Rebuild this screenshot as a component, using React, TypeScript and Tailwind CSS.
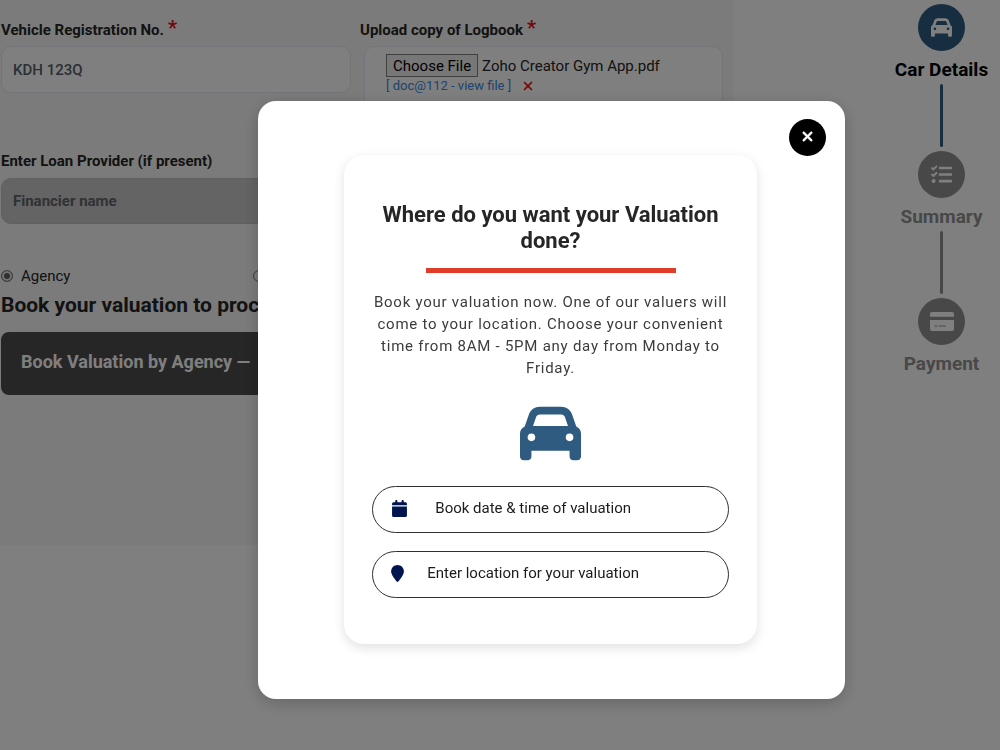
import { useRef, useState } from "react";
import { FaCar, FaCalendar, FaLocationPin, FaXmark } from "react-icons/fa6";
import { FaTasks } from "react-icons/fa";

function CardIcon() {
  return (
    <svg viewBox="0 0 24 19" className="h-[19px] w-6" fill="currentColor" aria-hidden="true">
      <path d="M2 0h20a2 2 0 0 1 2 2v2.7H0V2a2 2 0 0 1 2-2z" />
      <path
        fillRule="evenodd"
        d="M0 8h24v9a2 2 0 0 1-2 2H2a2 2 0 0 1-2-2zM4.4 13.6v.9h3.2v-.9zM8.8 13.6v.9h7v-.9z"
      />
    </svg>
  );
}

const steps = [
  { label: "Car Details", icon: <FaCar />, active: true },
  { label: "Summary", icon: <FaTasks />, active: false },
  { label: "Payment", icon: <CardIcon />, active: false },
];

function Stepper() {
  return (
    <ol className="ml-auto flex w-[117px] flex-col pt-1">
      {steps.map(({ label, icon, active }, i) => (
        <li key={label} className="flex flex-col items-center">
          <span
            className={
              active
                ? "flex size-[47px] items-center justify-center rounded-full bg-[#2f5b80] text-[21px] text-white"
                : "flex size-[47px] items-center justify-center rounded-full bg-[#909090] text-[21px] text-white"
            }
          >
            {icon}
          </span>
          <span
            className={
              active
                ? "mt-[5px] flex h-7 items-center whitespace-nowrap text-[19px] font-bold text-black"
                : "mt-[5px] flex h-7 items-center whitespace-nowrap text-[19px] font-bold text-[#909090]"
            }
          >
            {label}
          </span>
          {i < steps.length - 1 && (
            <span
              className={
                active
                  ? "mb-1 h-[63px] w-[3px] rounded-full bg-[#2f5b80]"
                  : "mb-1 h-[63px] w-[3px] rounded-full bg-[#909090]"
              }
            />
          )}
        </li>
      ))}
    </ol>
  );
}

function Required() {
  return <span className="mb-1 ml-1 text-xl leading-5 text-[#e01020]">*</span>;
}

function VehicleForm() {
  const fileRef = useRef<HTMLInputElement>(null);
  return (
    <form className="h-[545px] min-w-0 flex-1 bg-[#f6f6f6] pl-px pr-2.5 text-[#262626]">
      <div className="grid grid-cols-[350px_1fr] gap-[9px] pt-5">
        <div>
          <label htmlFor="reg" className="flex h-5 items-center text-[15px] font-bold">
            Vehicle Registration No.
            <Required />
          </label>
          <input
            id="reg"
            defaultValue="KDH 123Q"
            className="mt-1.5 h-[47px] w-full rounded-[10px] border border-[#e4e8ee] bg-white px-[11px] text-[15px] font-medium text-[#58606c] outline-none"
          />
        </div>
        <div>
          <label htmlFor="logbook" className="flex h-5 items-center text-[15px] font-bold">
            Upload copy of Logbook
            <Required />
          </label>
          <div className="ml-1 mt-1.5 h-[70px] rounded-[10px] border border-[#e4e8ee] bg-white px-[21px] pt-[7px]">
            <input id="logbook" ref={fileRef} type="file" className="hidden" />
            <div className="flex items-center gap-1 text-[15px] leading-5">
              <button
                type="button"
                onClick={() => fileRef.current?.click()}
                className="h-[23px] border border-[#808080] bg-[#efefef] px-1.5 leading-5 text-black"
              >
                Choose File
              </button>
              <span>Zoho Creator Gym App.pdf</span>
            </div>
            <div className="mt-px flex items-center gap-2.5 text-[13px] leading-4">
              <a href="#file" className="text-[#3a86e0]">
                [ doc@112 - view file ]
              </a>
              <button type="button" aria-label="Remove file" className="text-sm text-[#f01010]">
                <FaXmark />
              </button>
            </div>
          </div>
        </div>
      </div>

      <div className="pt-[35px]">
        <label htmlFor="loan" className="flex h-5 items-center text-[15px] font-bold">
          Enter Loan Provider (if present)
        </label>
        <input
          id="loan"
          placeholder="Financier name"
          className="mt-[7px] h-[46px] w-[350px] rounded-[10px] border border-[#c0c0c0] bg-[#c8c8c8] px-[11px] text-[15px] font-bold outline-none placeholder:text-[#606468]"
        />
      </div>

      <div className="mt-10 flex h-6 items-center">
        <label className="flex w-[252px] items-center gap-2 text-[15px]">
          <input
            type="radio"
            name="valuer"
            defaultChecked
            className="size-3 appearance-none rounded-full border border-[#808080] bg-[#f6f6f6] checked:bg-[#606060] checked:shadow-[inset_0_0_0_2px_#e8e8e8]"
          />
          Agency
        </label>
        <input
          type="radio"
          name="valuer"
          aria-label="Individual"
          className="size-3 appearance-none rounded-full border border-[#808080]"
        />
      </div>
      <h2 className="mt-1 text-[21px] font-bold leading-[26px]">Book your valuation to proceed</h2>
      <button
        type="button"
        className="mt-[14px] h-[63px] w-[350px] rounded-lg bg-[#4c4c4c] px-5 pb-1 text-left text-lg font-bold text-white"
      >
        Book Valuation by Agency —
      </button>
    </form>
  );
}

function ValuationDialog({ onClose }: { onClose: () => void }) {
  return (
    <div className="fixed inset-0 flex items-start justify-center bg-black/50 pl-[103px] pt-[101px]">
      <div
        role="dialog"
        aria-modal="true"
        aria-labelledby="dialog-title"
        className="relative w-[587px] rounded-[18px] bg-white pb-[55px] pl-[86px] pr-[88px] pt-[54px] shadow-[0_4px_16px_rgba(0,0,0,0.2)]"
      >
        <button
          type="button"
          aria-label="Close"
          onClick={onClose}
          className="absolute right-[19px] top-[18px] flex size-[37px] items-center justify-center rounded-full bg-black pb-0.5 text-[15px] text-white"
        >
          <FaXmark stroke="currentColor" strokeWidth={24} />
        </button>
        <section className="flex flex-col items-center rounded-[20px] bg-white px-7 pb-[46px] pt-[47px] text-center shadow-[0_4px_12px_rgba(0,0,0,0.12)]">
          <h1 id="dialog-title" className="text-[22px] font-bold leading-[26px] text-[#262626]">
            Where do you want your Valuation done?
          </h1>
          <hr className="mt-[14px] h-[5px] w-[250px] border-0 bg-[#e03c2a]" />
          <p className="mt-[18px] text-[15px] leading-[22px] tracking-wider text-[#3c3c3c]">
            Book your valuation now. One of our valuers will come to your location. Choose your
            convenient time from 8AM - 5PM any day from Monday to Friday.
          </p>
          <FaCar className="mt-6 size-[61px] text-[#2f5b80]" />
          <button
            type="button"
            className="mt-[22px] flex h-[47px] w-full items-center rounded-full border border-[#303030] pb-0.5 pl-[18px] pr-[97px] text-[15px] text-[#1c1c1c]"
          >
            <FaCalendar className="size-[17px] text-[#00144f]" />
            <span className="flex-1 text-right">Book date &amp; time of valuation</span>
          </button>
          <button
            type="button"
            className="mt-[18px] flex h-[47px] w-full items-center rounded-full border border-[#303030] pb-0.5 pl-[18px] pr-[89px] text-[15px] text-[#1c1c1c]"
          >
            <FaLocationPin className="h-[17px] w-[13px] text-[#00144f]" />
            <span className="flex-1 text-right">Enter location for your valuation</span>
          </button>
        </section>
      </div>
    </div>
  );
}

export default function App() {
  const [open, setOpen] = useState(true);
  return (
    <div className="min-h-screen bg-white font-['Roboto',sans-serif]">
      <main className="flex items-start">
        <VehicleForm />
        <aside className="w-[267px] shrink-0">
          <Stepper />
        </aside>
      </main>
      {open && <ValuationDialog onClose={() => setOpen(false)} />}
    </div>
  );
}
